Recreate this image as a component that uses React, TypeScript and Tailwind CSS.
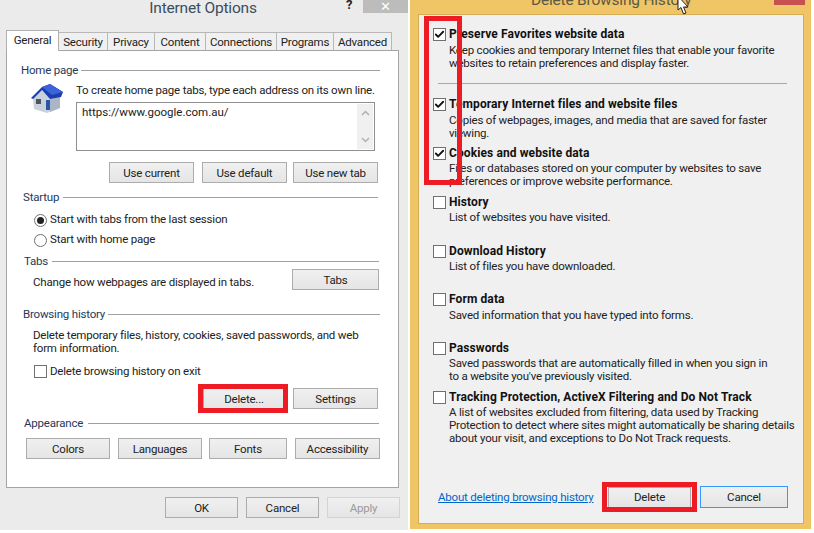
import type { ReactNode } from 'react'
import { Check } from 'lucide-react'

const font = "font-['Roboto','Noto_Sans',sans-serif]"

function WinButton({ children, className = '' }: { children: ReactNode; className?: string }) {
  return (
    <button
      type="button"
      className={`flex h-[21px] items-center justify-center border border-[#acacac] bg-gradient-to-b from-[#f0f0f0] to-[#e5e5e5] pt-[2px] text-[#222] ${className}`}
    >
      {children}
    </button>
  )
}

function Section({ label, lineWidth, className = '' }: { label: string; lineWidth: string; className?: string }) {
  return (
    <div className={`flex h-[14px] items-center justify-between ${className}`}>
      <span className="pt-px text-[#1e395b]">{label}</span>
      <span className={`h-px bg-[#a0a0a0] ${lineWidth}`} />
    </div>
  )
}

function HouseIcon() {
  return (
    <svg width="34" height="30" viewBox="0 0 34 30">
      <path d="M3 14 L12 6 L20 14 L30 12 L30 24 L17 29 L4 25 Z" fill="#c9d1da" />
      <path d="M20 15 L30 13 L30 24 L20 28 Z" fill="#aab6c6" />
      <path d="M1 14 L12 3 L20 0 L33 8 L31 13 L20 15 L12 6 L3 15 Z" fill="#1c3cb0" />
      <path d="M12 3 L20 0 L33 8 L22 11 Z" fill="#3a63dc" />
      <rect x="6" y="15" width="5" height="5" fill="#4d5560" />
      <rect x="16" y="16" width="4" height="10" fill="#2a55a8" />
    </svg>
  )
}

function WinCheck({ checked = false }: { checked?: boolean }) {
  return (
    <span className="flex h-[13px] w-[13px] shrink-0 items-center justify-center border border-[#707070] bg-white">
      {checked && <Check size={11} strokeWidth={4} className="text-[#111]" />}
    </span>
  )
}

function Radio({ checked = false, label }: { checked?: boolean; label: string }) {
  return (
    <div className="flex h-[20px] items-center gap-[3px] pl-[11px]">
      <span className="flex h-[13px] w-[13px] items-center justify-center rounded-full border border-[#707070] bg-white">
        {checked && <span className="h-[7px] w-[7px] rounded-full bg-[#222]" />}
      </span>
      <span>{label}</span>
    </div>
  )
}

const tabs = [
  { name: 'Security', w: 'w-[49px]' },
  { name: 'Privacy', w: 'w-[47px]' },
  { name: 'Content', w: 'w-[51px]' },
  { name: 'Connections', w: 'w-[71px]' },
  { name: 'Programs', w: 'w-[57px]' },
  { name: 'Advanced', w: 'w-[58px]' },
]

function InternetOptions() {
  return (
    <div className="absolute left-0 top-0 h-[530px] w-[408px] bg-[#ebebeb]">
      <div className="flex h-[30px] items-start justify-center pr-[2px] text-[15.5px] leading-[16px] text-[#3c4d5e]">
        Internet Options
      </div>
      <div className="absolute left-[346px] top-[-1px] text-[13px] font-bold leading-[12px] text-[#222]">?</div>
      <div className="absolute left-[363px] top-0 flex h-[13px] w-[45px] items-center justify-center bg-[#bcbcbc] text-[13px] leading-none text-white">
        ✕
      </div>
      <div className="ml-[6px] flex h-[20px] items-end">
        <div className="z-10 -mb-px flex h-[21px] w-[53px] items-center justify-center border border-b-0 border-[#b0b0b0] bg-white">
          General
        </div>
        {tabs.map((t) => (
          <div key={t.name} className={`flex h-[18px] items-center justify-center border border-b-0 border-l-0 border-[#b8b8b8] bg-[#f0f0f0] pt-[2px] ${t.w}`}>
            {t.name}
          </div>
        ))}
      </div>
      <div className="ml-[6px] h-[438px] w-[393px] border border-[#a5a5a5] bg-white pl-[14px] pr-[18px] pt-[12px]">
        <Section label="Home page" lineWidth="w-[299px]" />
        <div className="mt-[6px] flex">
          <div className="ml-[9px] w-[46px] shrink-0 pt-[1px]">
            <HouseIcon />
          </div>
          <div>
            <div className="h-[14px] leading-[14px]">To create home page tabs, type each address on its own line.</div>
            <div className="mt-[5px] flex h-[49px] w-[299px] border border-[#8f8f8f] pl-[5px]">
              <span className="flex-1 pt-px leading-[16px] tracking-normal">https://www.google.com.au/</span>
              <div className="m-px flex w-[16px] flex-col items-center justify-between bg-[#f0f0f0] py-[6px] text-[#b0b0b0]">
                <svg width="9" height="6" viewBox="0 0 9 6"><path d="M1 5 L4.5 1.5 L8 5" fill="none" stroke="currentColor" strokeWidth="1.5" /></svg>
                <svg width="9" height="6" viewBox="0 0 9 6"><path d="M1 1 L4.5 4.5 L8 1" fill="none" stroke="currentColor" strokeWidth="1.5" /></svg>
              </div>
            </div>
          </div>
        </div>
        <div className="ml-[88px] mt-[11px] flex">
          <WinButton className="w-[85px]">Use current</WinButton>
          <WinButton className="ml-[8px] w-[85px]">Use default</WinButton>
          <WinButton className="ml-[6px] w-[85px]">Use new tab</WinButton>
        </div>

        <Section label="Startup" lineWidth="w-[315px]" className="mt-[7px] pl-[2px] pr-[2px]" />
        <div className="mt-[6px] pl-[2px]">
          <Radio checked label="Start with tabs from the last session" />
          <Radio label="Start with home page" />
        </div>

        <Section label="Tabs" lineWidth="w-[327px]" className="mt-[4px] pl-[3px] pr-[1px]" />
        <div className="mt-px flex h-[21px] items-start justify-between pr-[1px]">
          <span className="ml-[12px] mt-[6px] leading-[14px]">Change how webpages are displayed in tabs.</span>
          <WinButton className="w-[87px]">Tabs</WinButton>
        </div>

        <Section label="Browsing history" lineWidth="w-[272px]" className="mt-[17px] pl-[2px]" />
        <div className="ml-[12px] mt-[8px] leading-[13px]">
          Delete temporary files, history, cookies, saved passwords, and web
          <br />
          form information.
        </div>
        <div className="ml-[13px] mt-[7px] flex h-[18px] items-center gap-[3px]">
          <WinCheck />
          <span className="pt-px">Delete browsing history on exit</span>
        </div>
        <div className="mt-[8px] flex justify-end pr-[2px]">
          <WinButton className="w-[82px]">Delete...</WinButton>
          <WinButton className="ml-[8px] w-[85px]">Settings</WinButton>
        </div>

        <Section label="Appearance" lineWidth="w-[291px]" className="mt-[7px] pl-[3px] pr-[1px]" />
        <div className="ml-[5px] mt-[8px] flex">
          <WinButton className="w-[84px]">Colors</WinButton>
          <WinButton className="ml-[8px] w-[84px]">Languages</WinButton>
          <WinButton className="ml-[7px] w-[78px]">Fonts</WinButton>
          <WinButton className="ml-[8px] w-[85px]">Accessibility</WinButton>
        </div>
      </div>
      <div className="mt-[9px] flex justify-end pr-[8px]">
        <WinButton className="w-[73px]">OK</WinButton>
        <WinButton className="ml-[8px] w-[73px]">Cancel</WinButton>
        <WinButton className="ml-[8px] w-[73px] !border-[#d4d4d4] !text-[#9a9a9a]">Apply</WinButton>
      </div>
    </div>
  )
}

const items = [
  { title: 'Temporary Internet files and website files', checked: true, loose: true, h: 'h-[49px]', desc: ['Copies of webpages, images, and media that are saved for faster', 'viewing.'] },
  { title: 'Cookies and website data', checked: true, h: 'h-[49px]', desc: ['Files or databases stored on your computer by websites to save', 'preferences or improve website performance.'] },
  { title: 'History', h: 'h-[49px]', desc: ['List of websites you have visited.'] },
  { title: 'Download History', h: 'h-[48px]', desc: ['List of files you have downloaded.'] },
  { title: 'Form data', loose: true, h: 'h-[49px]', desc: ['Saved information that you have typed into forms.'] },
  { title: 'Passwords', h: 'h-[49px]', desc: ['Saved passwords that are automatically filled in when you sign in', 'to a website you\'ve previously visited.'] },
  { title: 'Tracking Protection, ActiveX Filtering and Do Not Track', h: 'h-[60px]', desc: ['A list of websites excluded from filtering, data used by Tracking', 'Protection to detect where sites might automatically be sharing details', 'about your visit, and exceptions to Do Not Track requests.'] },
]

function Item({ title, desc, checked, loose, h = '' }: { title: string; desc: string[]; checked?: boolean; loose?: boolean; h?: string }) {
  return (
    <div className={`flex gap-[3px] ${h}`}>
      <div className="pt-[1px]">
        <WinCheck checked={checked} />
      </div>
      <div className="leading-[13px]">
        <div className={`h-[15px] text-[12px] font-bold leading-[15px] tracking-[0.1px] text-[#111] ${loose ? 'mb-[2px]' : 'mb-px'}`}>{title}</div>
        {desc.map((line) => (
          <div key={line}>{line}</div>
        ))}
      </div>
    </div>
  )
}

function DeleteDialog() {
  return (
    <div className="absolute left-[410px] top-0 h-[529px] w-[401px] overflow-hidden bg-[#f0c566]">
      <div className="absolute left-[121px] top-[-8px] text-[15.5px] leading-[16px] text-[#5a5a44]">Delete Browsing History</div>
      <div className="absolute left-[364px] top-0 h-[5px] w-[31px] bg-[#c75050]" />
      <div className="ml-[8px] mt-[14px] h-[510px] w-[386px] border border-[#d4ad54] bg-[#f0f0f0] pl-[14px] pr-[14px] pt-[12px]">
        <Item
          title="Preserve Favorites website data"
          checked
          loose
          desc={['Keep cookies and temporary Internet files that enable your favorite', 'websites to retain preferences and display faster.']}
        />
        <div className="ml-[5px] mt-[13px] h-px w-[349px] bg-[#a8a8a8]" />
        <div className="mt-[13px]">
          {items.map((it) => (
            <Item key={it.title} {...it} />
          ))}
        </div>
        <div className="mt-[36px] flex items-center pl-[5px]">
          <a className="w-[170px] pt-px text-[#0066cc] underline">About deleting browsing history</a>
          <WinButton className="w-[83px]">Delete</WinButton>
          <WinButton className="ml-[9px] !h-[22px] w-[88px] !border-[#3399ff]">Cancel</WinButton>
        </div>
      </div>
    </div>
  )
}

export default function App() {
  return (
    <div className={`relative h-[533px] w-[814px] overflow-hidden whitespace-nowrap bg-white text-[11.5px] tracking-[-0.2px] text-[#222] ${font}`}>
      <InternetOptions />
      <DeleteDialog />
      {/* annotations drawn over the screenshot */}
      <div className="absolute left-[198px] top-[384px] h-[29px] w-[90px] border-[5px] border-[#ed1c24]" />
      <div className="absolute left-[424px] top-[16px] h-[169px] w-[38px] border-[5px] border-[#ed1c24]" />
      <div className="absolute left-[602px] top-[482px] h-[30px] w-[95px] border-[5px] border-[#ed1c24]" />
      <svg className="absolute left-[677px] top-0" width="14" height="16" viewBox="0 0 14 16">
        <path d="M1 -4 L1 10 L4 7.5 L6.5 14 L9 13 L6.5 7 L11 7 Z" fill="#fff" stroke="#222" strokeWidth="1" />
      </svg>
    </div>
  )
}
